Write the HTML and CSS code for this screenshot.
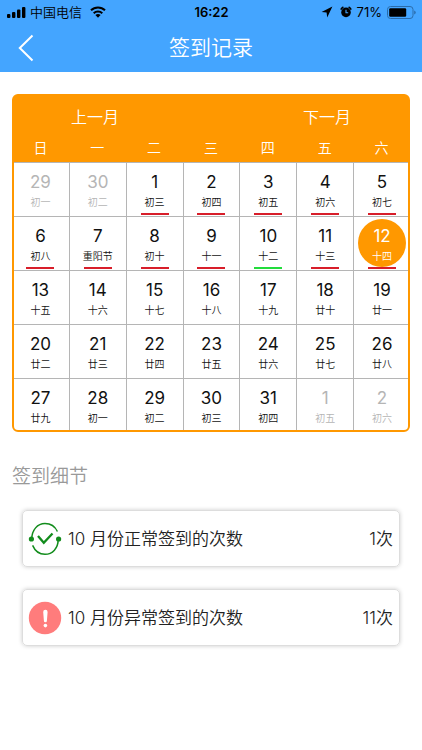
FILE: index.html
```html
<!DOCTYPE html>
<html lang="zh-CN">
<head>
<meta charset="utf-8">
<meta name="viewport" content="width=device-width, initial-scale=1">
<title>签到记录</title>
<link rel="stylesheet" href="styles.css">
</head>
<body>
<header class="header">
  <div class="status">
    <div class="status-left">
      <svg width="19" height="12" viewBox="0 0 19 12" aria-hidden="true"><rect x="0" y="8" width="3.4" height="4" rx="1"/><rect x="5" y="6" width="3.4" height="6" rx="1"/><rect x="10" y="3.5" width="3.4" height="8.5" rx="1"/><rect x="15" y="1" width="3.4" height="11" rx="1"/></svg>
      <span class="carrier">中国电信</span>
      <svg class="wifi" width="16" height="12" viewBox="0 0 16 12" aria-hidden="true"><g fill="none" stroke="#000" stroke-width="2"><path d="M1 4.3a10 10 0 0 1 14 0"/><path d="M3.7 7.2a6.2 6.2 0 0 1 8.6 0"/></g><path d="M8 11.8 5.4 9.1a3.8 3.8 0 0 1 5.2 0z"/></svg>
    </div>
    <span class="clock">16:22</span>
    <div class="status-right">
      <svg width="12" height="12" viewBox="0 0 12 12" aria-hidden="true"><path d="M11.4.6.6 5.9l5 .5.6 5z"/></svg>
      <svg class="alarm" width="12" height="12" viewBox="0 0 12 12" aria-hidden="true"><circle cx="6" cy="6.4" r="4.8"/><path d="M.8 3.6A6 6 0 0 1 3.4 1M8.6 1a6 6 0 0 1 2.6 2.6" fill="none" stroke="#000" stroke-width="1.5"/><path d="M6 3.7v3h2.2" fill="none" stroke="#44a5ff" stroke-width="1.1"/></svg>
      <span class="percent">71%</span>
      <svg width="29" height="13" viewBox="0 0 29 13" aria-hidden="true"><rect x=".5" y=".5" width="25.5" height="12" rx="3" fill="none" stroke="#2a6cab"/><rect x="2.2" y="2.2" width="17" height="8.6" rx="1.2"/><path d="M27.2 4.5q1.5.4 1.5 2t-1.5 2z" fill="#2a6cab"/></svg>
    </div>
  </div>
  <div class="navbar">
    <button class="back" type="button" aria-label="返回"><svg width="16" height="28" viewBox="0 0 16 28" aria-hidden="true"><path d="M14.5 1.5 1.8 14l12.7 12.5" fill="none" stroke="#fff" stroke-width="2"/></svg></button>
    <h1 class="title">签到记录</h1>
  </div>
</header>
<main class="main">
  <section class="calendar">
    <div class="months">
      <button class="month" type="button">上一月</button>
      <button class="month" type="button">下一月</button>
    </div>
    <table class="days">
      <thead><tr><th>日</th><th>一</th><th>二</th><th>三</th><th>四</th><th>五</th><th>六</th></tr></thead>
      <tbody>
        <tr>
          <td><div class="day other"><b>29</b><small>初一</small></div></td>
          <td><div class="day other"><b>30</b><small>初二</small></div></td>
          <td><div class="day late"><b>1</b><small>初三</small></div></td>
          <td><div class="day late"><b>2</b><small>初四</small></div></td>
          <td><div class="day late"><b>3</b><small>初五</small></div></td>
          <td><div class="day late"><b>4</b><small>初六</small></div></td>
          <td><div class="day late"><b>5</b><small>初七</small></div></td>
        </tr>
        <tr>
          <td><div class="day late"><b>6</b><small>初八</small></div></td>
          <td><div class="day late"><b>7</b><small>重阳节</small></div></td>
          <td><div class="day late"><b>8</b><small>初十</small></div></td>
          <td><div class="day late"><b>9</b><small>十一</small></div></td>
          <td><div class="day signed"><b>10</b><small>十二</small></div></td>
          <td><div class="day late"><b>11</b><small>十三</small></div></td>
          <td><div class="day late today"><b>12</b><small>十四</small></div></td>
        </tr>
        <tr>
          <td><div class="day"><b>13</b><small>十五</small></div></td>
          <td><div class="day"><b>14</b><small>十六</small></div></td>
          <td><div class="day"><b>15</b><small>十七</small></div></td>
          <td><div class="day"><b>16</b><small>十八</small></div></td>
          <td><div class="day"><b>17</b><small>十九</small></div></td>
          <td><div class="day"><b>18</b><small>廿十</small></div></td>
          <td><div class="day"><b>19</b><small>廿一</small></div></td>
        </tr>
        <tr>
          <td><div class="day"><b>20</b><small>廿二</small></div></td>
          <td><div class="day"><b>21</b><small>廿三</small></div></td>
          <td><div class="day"><b>22</b><small>廿四</small></div></td>
          <td><div class="day"><b>23</b><small>廿五</small></div></td>
          <td><div class="day"><b>24</b><small>廿六</small></div></td>
          <td><div class="day"><b>25</b><small>廿七</small></div></td>
          <td><div class="day"><b>26</b><small>廿八</small></div></td>
        </tr>
        <tr>
          <td><div class="day"><b>27</b><small>廿九</small></div></td>
          <td><div class="day"><b>28</b><small>初一</small></div></td>
          <td><div class="day"><b>29</b><small>初二</small></div></td>
          <td><div class="day"><b>30</b><small>初三</small></div></td>
          <td><div class="day"><b>31</b><small>初四</small></div></td>
          <td><div class="day other"><b>1</b><small>初五</small></div></td>
          <td><div class="day other"><b>2</b><small>初六</small></div></td>
        </tr>
      </tbody>
    </table>
  </section>
  <h2 class="subtitle">签到细节</h2>
  <section class="cards">
    <div class="card">
      <svg width="34" height="34" viewBox="0 0 34 34" aria-hidden="true"><g fill="none" stroke="#128c1c"><path d="M3.8 17C3.8 8 9.5 1.5 17 1.5c5.5 0 10 2.8 12.4 8M4.6 23.4C7 29 11.500 32.300 17 32.300c7.500 0 13.200-6 13.200-15" stroke-width="1.5"/><path d="m10 14 5.800 6.800L24.500 11.500" stroke-width="2.300"/></g><g fill="#128c1c"><circle cx="3.400" cy="17" r="2.600"/><circle cx="30.600" cy="17" r="2.600"/></g></svg>
      <span class="label">10 月份正常签到的次数</span><span>1次</span>
    </div>
    <div class="card">
      <svg width="34" height="34" viewBox="0 0 34 34" aria-hidden="true"><circle cx="17" cy="17" r="16.2" fill="#ff7c7c"/><path d="M15.2 11a2.2 2.2 0 0 1 4.4 0l-.7 8.800a1.500 1.500 0 0 1-3 0z" fill="#fff"/><circle cx="17.400" cy="24.600" r="1.800" fill="#fff"/></svg>
      <span class="label">10 月份异常签到的次数</span><span>11次</span>
    </div>
  </section>
</main>
</body>
</html>
```
FILE: styles.css
```css
* { box-sizing: border-box; }
body {
  margin: 0;
  background: #fff;
  color: #111;
  font-family: Inter, "Noto Sans CJK SC", sans-serif;
}
button {
  padding: 0;
  border: 0;
  background: none;
  color: inherit;
  font: inherit;
}
svg { display: block; flex: none; }

.header { background: #44a5ff; }
.status {
  display: grid;
  grid-template-columns: 1fr auto 1fr;
  align-items: center;
  height: 24px;
  padding: 0 6px 0 7px;
  font-size: 13px;
  line-height: 20px;
  color: #000;
}
.status-left, .status-right { display: flex; align-items: center; }
.status-left { gap: 4px; }
.status-right { justify-content: flex-end; gap: 5px; }
.wifi { margin-left: 4px; }
.alarm { margin-left: 2px; }
.carrier { font-weight: 350; }
.clock { font-weight: 600; }
.navbar {
  display: grid;
  grid-template-columns: 48px 1fr 48px;
  align-items: center;
  height: 48px;
  color: #fff;
}
.back { padding-left: 18px; }
.title {
  margin: 0;
  font-size: 21px;
  line-height: 30px;
  font-weight: 350;
  text-align: center;
}

.main { padding: 22px 12px; }
.calendar {
  overflow: hidden;
  border: 2px solid #ff9800;
  border-width: 1px 2px 2px;
  border-radius: 6px;
  background: #ff9800;
  color: #fff;
}
.months {
  display: flex;
  justify-content: space-between;
  padding: 10px 57px 6px;
}
.month { font-size: 16px; line-height: 24px; font-weight: 350; }
.days {
  width: calc(100% + 4px);
  margin: 0 -2px;
  table-layout: fixed;
  border-collapse: separate;
  border-spacing: 0;
}
.days th {
  height: 27px;
  padding: 0 0 2px;
  font-size: 14px;
  line-height: 20px;
  font-weight: 350;
}
.days td {
  padding: 0;
  border-top: 1px solid #b5b5b5;
  background: #fff;
  color: #111;
}
.days td + td { border-left: 1px solid #b5b5b5; }
.day {
  position: relative;
  display: flex;
  flex-direction: column;
  align-items: center;
  height: 53px;
  padding-top: 8px;
}
.days tr:last-child .day { height: 51px; }
.day b { font-size: 17px; line-height: 22px; font-weight: 400; }
.day small { font-size: 10px; line-height: 18px; font-weight: 350; }
.day.other { color: #b5b5b5; }
.late::after, .signed::after {
  content: "";
  width: 28px;
  height: 2px;
  margin-top: 2px;
  background: #d81e2a;
}
.signed::after { background: #22dc3c; }
.day.today { z-index: 0; color: #fff; }
.today::before {
  content: "";
  position: absolute;
  z-index: -1;
  top: 2px;
  left: 50%;
  width: 48px;
  height: 48px;
  border-radius: 50%;
  background: #ff9800;
  transform: translateX(-50%);
}

.subtitle {
  margin: 32px 0 20px;
  color: #999;
  font-size: 19px;
  line-height: 26px;
  font-weight: 350;
}
.cards { display: grid; gap: 22px; padding: 0 10px; }
.card {
  display: flex;
  align-items: center;
  gap: 6px;
  height: 57px;
  padding: 0 6px 0 5px;
  border: 1px solid #ddd;
  border-radius: 5px;
  box-shadow: 0 0 4px #ccc;
  color: #222;
  font-size: 17px;
  line-height: 26px;
  font-weight: 350;
}
.label { flex: 1; }
```
